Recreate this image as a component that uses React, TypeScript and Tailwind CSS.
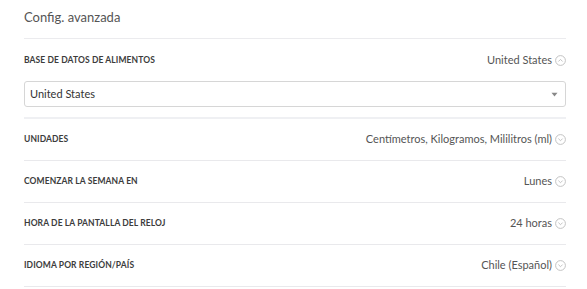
import React from "react";

const ROWS = [
  { label: "UNIDADES", value: "Centímetros, Kilogramos, Mililitros (ml)" },
  { label: "COMENZAR LA SEMANA EN", value: "Lunes" },
  { label: "HORA DE LA PANTALLA DEL RELOJ", value: "24 horas" },
  { label: "IDIOMA POR REGIÓN/PAÍS", value: "Chile (Español)" },
];

function CircleChevron({ up }: { up?: boolean }) {
  return (
    <svg width="11" height="11" viewBox="0 0 11 11" className="ml-[3px] shrink-0">
      <circle cx="5.5" cy="5.5" r="4.9" fill="none" stroke="#bcbcbc" strokeWidth="0.9" />
      <path
        d={up ? "M3.4 6.5 L5.5 4.4 L7.6 6.5" : "M3.4 4.6 L5.5 6.7 L7.6 4.6"}
        fill="none"
        stroke="#bcbcbc"
        strokeWidth="0.9"
      />
    </svg>
  );
}

function Row({ label, value }: { label: string; value: string }) {
  return (
    <div className="flex h-[42px] items-center justify-between border-b border-[#e9e9ec]">
      <span className="text-[8.5px] font-bold tracking-[0.1px] text-[#3c3c3c]">{label}</span>
      <span className="flex items-center text-[11px] text-[#555]">
        {value}
        <CircleChevron />
      </span>
    </div>
  );
}

export default function App() {
  return (
    <div className="h-[289px] w-[587px] bg-white pl-6 pr-[21px] font-['Lato',sans-serif]">
      <div className="flex h-[39px] items-center border-b border-[#ebebee] pb-[2px]">
        <span className="text-[13px] text-[#555]">Config. avanzada</span>
      </div>

      <div className="border-b-2 border-[#eff0f3] pb-[10px]">
        <div className="flex h-[42px] items-center justify-between">
          <span className="text-[8.5px] font-bold tracking-[0.1px] text-[#3c3c3c]">
            BASE DE DATOS DE ALIMENTOS
          </span>
          <span className="flex items-center text-[11px] text-[#555]">
            United States
            <CircleChevron up />
          </span>
        </div>
        <div className="flex h-[26px] items-center justify-between rounded-[3px] border border-[#d6d6d6] pl-[5px] pr-[7px]">
          <span className="text-[11px] text-[#333]">United States</span>
          <svg width="7" height="5" viewBox="0 0 7 5">
            <path d="M0.5 0.8 L6.5 0.8 L3.5 4.4 Z" fill="#888" />
          </svg>
        </div>
      </div>

      {ROWS.map((r) => (
        <Row key={r.label} label={r.label} value={r.value} />
      ))}
    </div>
  );
}
